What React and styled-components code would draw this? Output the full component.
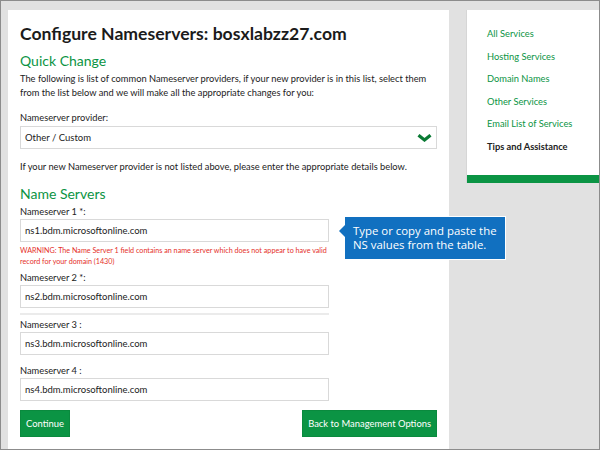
import React from 'react';
import styled, { createGlobalStyle } from 'styled-components';

const green = '#0b9444';

const sideLinks = [
  { name: 'All Services' },
  { name: 'Hosting Services' },
  { name: 'Domain Names' },
  { name: 'Other Services' },
  { name: 'Email List of Services' },
  { name: 'Tips and Assistance', current: true },
];

const servers = [
  { label: 'Nameserver 1 *:', value: 'ns1.bdm.microsoftonline.com', top: 2, warning: true },
  { label: 'Nameserver 2 *:', value: 'ns2.bdm.microsoftonline.com', top: 4, rule: true },
  { label: 'Nameserver 3 :', value: 'ns3.bdm.microsoftonline.com', top: 3 },
  { label: 'Nameserver 4 :', value: 'ns4.bdm.microsoftonline.com', top: 9 },
];

export default function App() {
  return (
    <>
      <GlobalStyle />
      <Frame>
        <Main>
          <Title>Configure Nameservers: bosxlabzz27.com</Title>
          <SectionTitle $top={6}>Quick Change</SectionTitle>
          <Text $top={2}>
            The following is list of common Nameserver providers, if your new provider is in this list, select them
            from the list below and we will make all the appropriate changes for you:
          </Text>
          <Label $top={11}>Nameserver provider:</Label>
          <Select>
            <span>Other / Custom</span>
            <svg width="15" height="8" viewBox="0 0 15 8">
              <path d="M1.5 1.2 L7.5 6 L13.5 1.2" fill="none" stroke="#0a7a34" strokeWidth="3.2" />
            </svg>
          </Select>
          <Text $top={11}>If your new Nameserver provider is not listed above, please enter the appropriate details below.</Text>
          <SectionTitle $top={11}>Name Servers</SectionTitle>
          {servers.map(({ label, value, top, warning, rule }) => (
            <Field key={label} $top={top}>
              <Label>{label}</Label>
              <FieldRow>
                <Input>{value}</Input>
                {warning && (
                  <Callout>
                    Type or copy and paste the
                    <br />
                    NS values from the table.
                  </Callout>
                )}
              </FieldRow>
              {warning && (
                <Warning>
                  WARNING: The Name Server 1 field contains an name server which does not appear to have valid
                  <br />
                  record for your domain (1430)
                </Warning>
              )}
              {rule && <Rule />}
            </Field>
          ))}
          <Buttons>
            <Button>Continue</Button>
            <Button>Back to Management Options</Button>
          </Buttons>
        </Main>
        <Side>
          <SideList>
            {sideLinks.map(({ name, current }) => (
              <SideLink key={name} $current={current}>
                {name}
              </SideLink>
            ))}
          </SideList>
          <SideBar />
        </Side>
      </Frame>
    </>
  );
}

const GlobalStyle = createGlobalStyle`
  html, body {
    margin: 0;
    padding: 0;
    background: #e1e1e1;
  }
  body {
    font-family: Lato, "Liberation Sans", sans-serif;
    color: #222;
  }
`;

const Frame = styled.div`
  box-sizing: border-box;
  width: 600px;
  height: 450px;
  overflow: hidden;
  border: 1px solid #8c8c8c;
  padding: 9px 0 0 7px;
  display: flex;
  align-items: flex-start;
  gap: 17px;
  background: #e1e1e1;
`;

const Main = styled.div`
  box-sizing: border-box;
  width: 441px;
  min-height: 460px;
  background: #fff;
  padding: 12px 12px 0 12px;
`;

const Title = styled.h1`
  margin: 0;
  font-size: 17.6px;
  font-weight: 700;
  line-height: 24px;
  color: #1b1b1b;
`;

const SectionTitle = styled.h2`
  margin: ${p => p.$top}px 0 0;
  font-size: 14px;
  font-weight: 400;
  line-height: 18px;
  color: ${green};
`;

const Text = styled.p`
  margin: ${p => p.$top || 0}px 0 0;
  font-size: 9.3px;
  line-height: 14px;
  color: #222;
`;

const Label = styled.div`
  margin-top: ${p => p.$top || 0}px;
  font-size: 9.3px;
  line-height: 14px;
  color: #222;
`;

const Select = styled.div`
  box-sizing: border-box;
  margin-top: 1px;
  height: 23px;
  border: 1px solid #d9d9d9;
  padding: 0 4px 0 4px;
  display: flex;
  align-items: center;
  justify-content: space-between;
  font-size: 9.5px;
  color: #222;
`;

const Field = styled.div`
  margin-top: ${p => p.$top}px;
`;

const FieldRow = styled.div`
  position: relative;
`;

const Input = styled.div`
  box-sizing: border-box;
  width: 309px;
  height: 23px;
  border: 1px solid #d9d9d9;
  padding: 0 4px;
  display: flex;
  align-items: center;
  font-size: 9.5px;
  color: #222;
`;

const Callout = styled.div`
  position: absolute;
  left: 324px;
  top: -3px;
  box-sizing: border-box;
  width: 162px;
  height: 44px;
  padding: 7px 0 0 8px;
  background: #1170c0;
  border: 1px solid #fff;
  color: #fff;
  font-family: "Open Sans", "Noto Sans", sans-serif;
  font-size: 11.4px;
  line-height: 14px;
  &::before {
    content: '';
    position: absolute;
    left: -6px;
    top: 8px;
    border-style: solid;
    border-width: 6px 6px 6px 0;
    border-color: transparent #1170c0 transparent transparent;
  }
`;

const Warning = styled.div`
  margin-top: 3px;
  font-size: 7.2px;
  line-height: 11px;
  color: #e5302a;
`;

const Rule = styled.div`
  width: 309px;
  height: 2px;
  margin-top: 5px;
  background: #ebebeb;
`;

const Buttons = styled.div`
  display: flex;
  justify-content: space-between;
  margin-top: 9px;
`;

const Button = styled.button`
  height: 27px;
  padding: 0 5px;
  background: ${green};
  border: 1px solid #0a8a3e;
  color: #fff;
  font-family: Lato, "Liberation Sans", sans-serif;
  font-size: 9.4px;
`;

const Side = styled.div`
  width: 132px;
  background: #fff;
  border-left: 1px solid #d6d6d6;
`;

const SideList = styled.div`
  display: flex;
  flex-direction: column;
  gap: 8.6px;
  padding: 17px 0 21px 20px;
`;

const SideLink = styled.a`
  font-size: 9.3px;
  line-height: 14px;
  font-weight: ${p => (p.$current ? 700 : 400)};
  color: ${p => (p.$current ? '#222' : green)};
`;

const SideBar = styled.div`
  height: 8px;
  background: ${green};
`;
